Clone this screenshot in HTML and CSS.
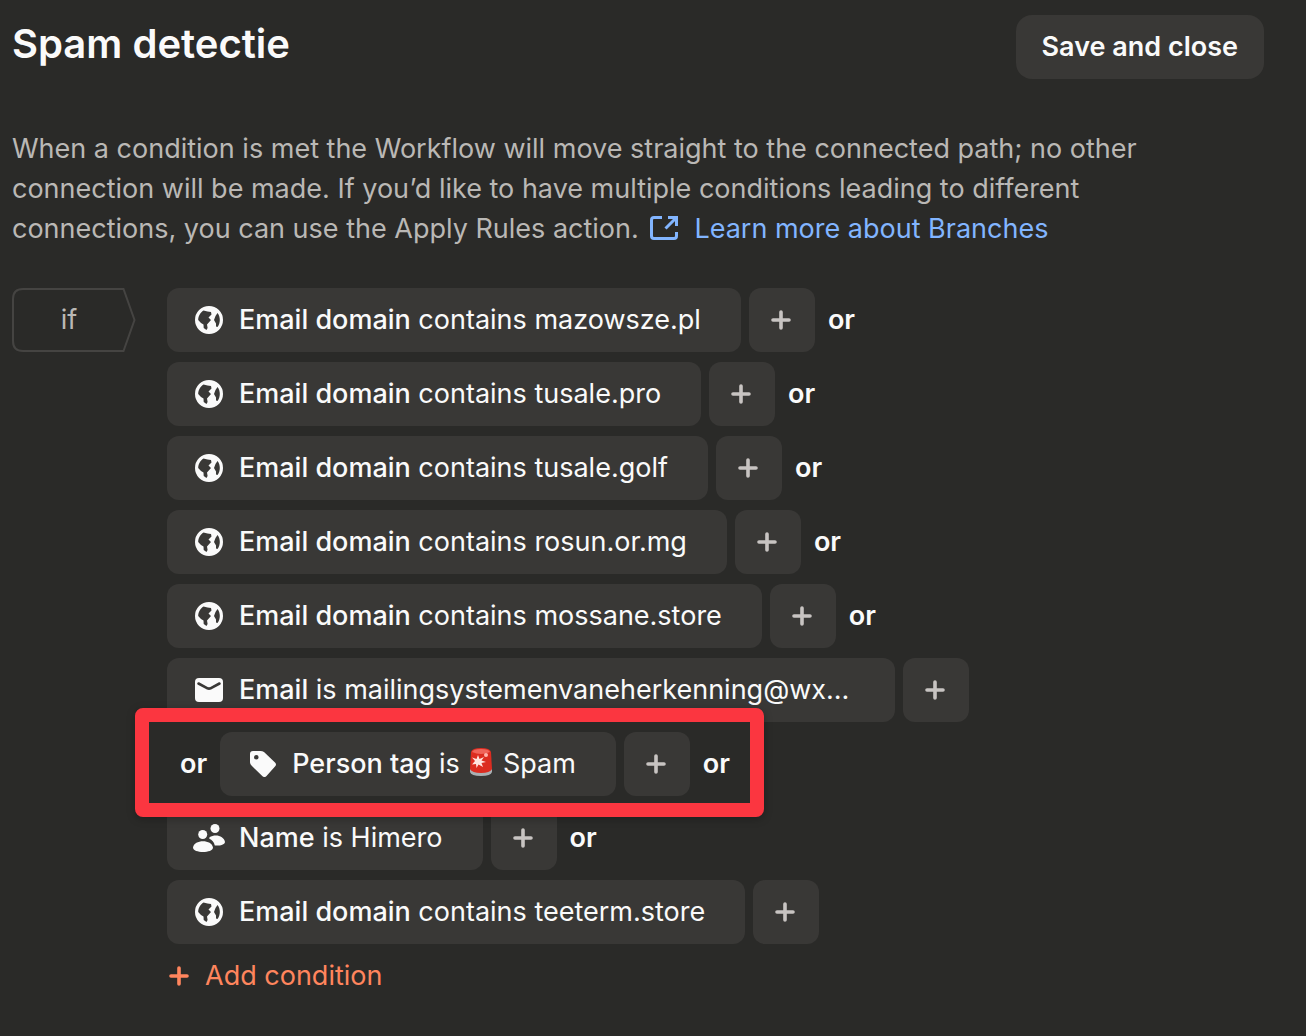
FILE: index.html
```html
<!DOCTYPE html>
<html lang="en">
<head>
<meta charset="utf-8">
<meta name="viewport" content="width=device-width, initial-scale=1">
<title>Spam detectie</title>
<link rel="stylesheet" href="styles.css">
</head>
<body>
<svg class="sprite" aria-hidden="true">
  <symbol id="globe" viewBox="0 0 28 28"><path fill="currentColor" fill-rule="evenodd" d="M14 0a14 14 0 1 1 0 28a14 14 0 0 1 0-28zM8.500 4.500C5.500 6.500 3.200 10 3.200 14L6 17L8.500 18.500L8.700 22L11.500 24L12.600 22L12 18.500L16 14L13.500 11.500L16.500 8.500L16 6L12.500 5.500ZM22.500 7L20.500 10L19 14L21 17.500L21 20.500L22.500 21C25.600 17 25.600 11 22.500 7Z"/></symbol>
  <symbol id="mail" viewBox="0 0 28 24"><rect width="28" height="24" rx="4" fill="currentColor"/><path d="M3.500 5.500L12.500 10.300Q14 11 15.500 10.300L24.500 5.500" fill="none" stroke="#393836" stroke-width="2.600" stroke-linecap="round"/></symbol>
  <symbol id="tag" viewBox="0 0 26 26"><path fill="currentColor" fill-rule="evenodd" d="M3 0H10.500Q12.500 0 14 1L25 11.500Q27 13.500 25 15.500L16.500 25Q14.500 27 12.500 25.200L1.500 14.500Q0 13 0 11V3Q0 0 3 0ZM6.300 4A2.300 2.300 0 1 0 6.300 8.600A2.300 2.300 0 1 0 6.300 4Z"/></symbol>
  <symbol id="people" viewBox="0 0 32 28"><g fill="currentColor"><circle cx="22" cy="4.500" r="4.500"/><circle cx="9.700" cy="10.500" r="4.500"/><path d="M0 23.500C1 15 19 15 20 23.500C20 29.500 0 29.500 0 23.500ZM16.500 13.300C22 9.500 31 11.500 32 18C31.500 21 26 22 21.800 21.500C21 18 19 16 16.300 14.800Z"/></g></symbol>
  <symbol id="plus" viewBox="0 0 20 20"><path d="M10 2V18M2 10H18" fill="none" stroke="currentColor" stroke-width="3.600" stroke-linecap="round"/></symbol>
</svg>
<main class="panel">
  <header class="header">
    <h1 class="title">Spam detectie</h1>
    <button class="save" type="button">Save and close</button>
  </header>
  <p class="intro">When a condition is met the Workflow will move straight to the connected path; no other connection will be made. If you’d like to have multiple conditions leading to different connections, you can use the Apply Rules action. <a class="learn" href="#"><svg class="external" viewBox="0 0 28 24" aria-hidden="true"><path d="M12 1.500H4Q1.500 1.500 1.500 4V20Q1.500 22.500 4 22.500H24Q26.500 22.500 26.500 20V16M15.500 12.500L26 2M18 1.500H26.500V10" fill="none" stroke="currentColor" stroke-width="3"/></svg>Learn more about Branches</a></p>
  <section class="branch">
    <div class="if"><svg class="if-shape" viewBox="0 0 124 64" aria-hidden="true"><path d="M11 1H111.500L122.500 32L111.500 63H11Q1 63 1 53V11Q1 1 11 1Z" fill="none" stroke="#454442" stroke-width="2"/></svg><span class="if-label">if</span></div>
    <div class="rules">
      <div class="row"><button class="chip" type="button"><svg class="icon globe"><use href="#globe"/></svg><span class="text"><b>Email domain</b> contains mazowsze.pl</span></button><button class="add" type="button" aria-label="Add"><svg class="plus"><use href="#plus"/></svg></button><span class="or">or</span></div>
      <div class="row"><button class="chip" type="button"><svg class="icon globe"><use href="#globe"/></svg><span class="text"><b>Email domain</b> contains tusale.pro</span></button><button class="add" type="button" aria-label="Add"><svg class="plus"><use href="#plus"/></svg></button><span class="or">or</span></div>
      <div class="row"><button class="chip" type="button"><svg class="icon globe"><use href="#globe"/></svg><span class="text"><b>Email domain</b> contains tusale.golf</span></button><button class="add" type="button" aria-label="Add"><svg class="plus"><use href="#plus"/></svg></button><span class="or">or</span></div>
      <div class="row"><button class="chip" type="button"><svg class="icon globe"><use href="#globe"/></svg><span class="text"><b>Email domain</b> contains rosun.or.mg</span></button><button class="add" type="button" aria-label="Add"><svg class="plus"><use href="#plus"/></svg></button><span class="or">or</span></div>
      <div class="row"><button class="chip" type="button"><svg class="icon globe"><use href="#globe"/></svg><span class="text"><b>Email domain</b> contains mossane.store</span></button><button class="add" type="button" aria-label="Add"><svg class="plus"><use href="#plus"/></svg></button><span class="or">or</span></div>
      <div class="row"><button class="chip wide" type="button"><svg class="icon mail"><use href="#mail"/></svg><span class="text"><b>Email</b> is mailingsystemenvaneherkenning@wx...</span></button><button class="add" type="button" aria-label="Add"><svg class="plus"><use href="#plus"/></svg></button></div>
      <div class="row marked"><span class="or">or</span><button class="chip" type="button"><svg class="icon tag"><use href="#tag"/></svg><span class="text"><b>Person tag</b> is <svg class="siren" viewBox="0 0 24 30" role="img" aria-label="Siren"><path d="M1 22Q12 28 23 22V25Q22 29 12 29Q2 29 1 25Z" fill="#a9b0b3"/><path d="M2 5Q3 1 12 1Q21 1 22 5L23 22Q21 26 12 26Q3 26 1 22Z" fill="#dc2c20"/><path d="M3 5Q12 9 21 5Q20 2 12 2Q4 2 3 5Z" fill="#f0645a"/><path d="M9 8L10.500 12L15 10L12.500 13.500L17 15L12.500 16L14 20L9.500 17.500L7.500 21L7 17L3 17.500L6 14L3 10.500L7.500 12Z" fill="#ffe4df"/><circle cx="17" cy="8" r="2" fill="#ffb4ac"/></svg> Spam</span></button><button class="add" type="button" aria-label="Add"><svg class="plus"><use href="#plus"/></svg></button><span class="or">or</span></div>
      <div class="row"><button class="chip" type="button"><svg class="icon people"><use href="#people"/></svg><span class="text"><b>Name</b> is Himero</span></button><button class="add" type="button" aria-label="Add"><svg class="plus"><use href="#plus"/></svg></button><span class="or">or</span></div>
      <div class="row"><button class="chip" type="button"><svg class="icon globe"><use href="#globe"/></svg><span class="text"><b>Email domain</b> contains teeterm.store</span></button><button class="add" type="button" aria-label="Add"><svg class="plus"><use href="#plus"/></svg></button></div>
      <button class="add-condition" type="button"><svg class="plus"><use href="#plus"/></svg>Add condition</button>
    </div>
  </section>
</main>
</body>
</html>
```
FILE: styles.css
```css
* { box-sizing: border-box; }
body {
  margin: 0;
  background: #2a2a28;
  color: #fafafa;
  font: 400 27px/40px Inter, "Liberation Sans", sans-serif;
}
button {
  border: 0;
  margin: 0;
  padding: 0;
  background: none;
  color: inherit;
  font: inherit;
  cursor: pointer;
}
svg { flex: none; }
.sprite { position: absolute; width: 0; height: 0; }
.panel { padding: 15px 42px 40px 12px; }
.header { display: flex; justify-content: space-between; align-items: flex-start; }
.title { margin: 0; font-size: 40px; line-height: 58px; font-weight: 600; }
.save {
  height: 64px;
  padding: 0 26px;
  border-radius: 16px;
  background: #393836;
  font-weight: 600;
}
.intro { max-width: 1160px; margin: 50px 0 39px; color: #bab8b5; }
.learn { display: inline-block; color: #82b5ff; text-decoration: none; }
.external { width: 28px; height: 24px; margin: 0 16px 0 4px; vertical-align: -2px; }
.branch { display: flex; align-items: flex-start; gap: 31px; }
.if { flex: none; display: grid; width: 124px; height: 64px; color: #bab8b5; }
.if-shape, .if-label { grid-area: 1 / 1; }
.if-shape { width: 124px; height: 64px; }
.if-label { padding-right: 10px; text-align: center; line-height: 64px; }
.rules { display: flex; flex-direction: column; align-items: flex-start; gap: 10px; }
.row { display: flex; align-items: center; gap: 8px; }
.chip {
  display: flex;
  align-items: center;
  height: 64px;
  padding: 0 40px 0 26px;
  border-radius: 12px;
  background: #393836;
  white-space: nowrap;
}
.wide { width: 728px; }
b { font-weight: 500; }
.icon { margin: 0 16px 0 2px; }
.globe { width: 28px; height: 28px; }
.mail { width: 28px; height: 24px; }
.tag { width: 26px; height: 26px; margin-left: 4px; }
.people { width: 32px; height: 28px; margin: 0 14px 0 0; }
.siren { width: 24px; height: 30px; margin: 0 2px; vertical-align: -4px; }
.add {
  display: flex;
  align-items: center;
  justify-content: center;
  width: 66px;
  height: 64px;
  padding-right: 2px;
  border-radius: 12px;
  background: #393836;
  color: #c8c4c2;
}
.plus { width: 20px; height: 20px; }
.or { padding: 0 5px; font-weight: 600; }
.marked { position: relative; padding-left: 8px; }
.marked::after {
  content: "";
  position: absolute;
  inset: -24px -29px -21px -32px;
  border: 14px solid #fb3640;
  border-radius: 8px;
  box-shadow: 0 2px 8px #0004;
  pointer-events: none;
}
.add-condition {
  display: flex;
  align-items: center;
  gap: 16px;
  margin: 2px 0 0 2px;
  color: #ff855d;
}
```
